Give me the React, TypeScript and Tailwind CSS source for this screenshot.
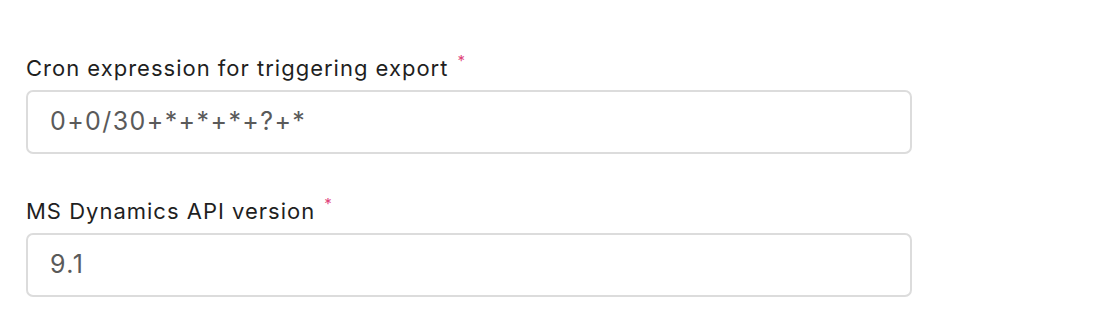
import React from "react";

function Field({ label, value }: { label: string; value: string }) {
  return (
    <div className="flex flex-col">
      <div className="flex items-start h-[28px]">
        <span className="text-[22px] leading-[28px] tracking-[1px] text-[#1f1f1f]">{label}</span>
        <span className="ml-[9px] text-[15px] leading-[15px] text-[#e0457b] -mt-[1px]">*</span>
      </div>
      <div className="mt-[8px] w-[886px] h-[64px] rounded-[7px] border-2 border-[#dcdcdc] bg-white flex items-center px-[22px]">
        <span className="text-[25px] text-[#5a5a5a] tracking-[1.4px]">{value}</span>
      </div>
    </div>
  );
}

export default function App() {
  return (
    <div
      className="w-[1110px] h-[328px] bg-white pl-[26px] pt-[54px] flex flex-col gap-[43px]"
      style={{ fontFamily: "Inter, 'Noto Sans', sans-serif" }}
    >
      <Field label="Cron expression for triggering export" value="0+0/30+*+*+*+?+*" />
      <Field label="MS Dynamics API version" value="9.1" />
    </div>
  );
}
